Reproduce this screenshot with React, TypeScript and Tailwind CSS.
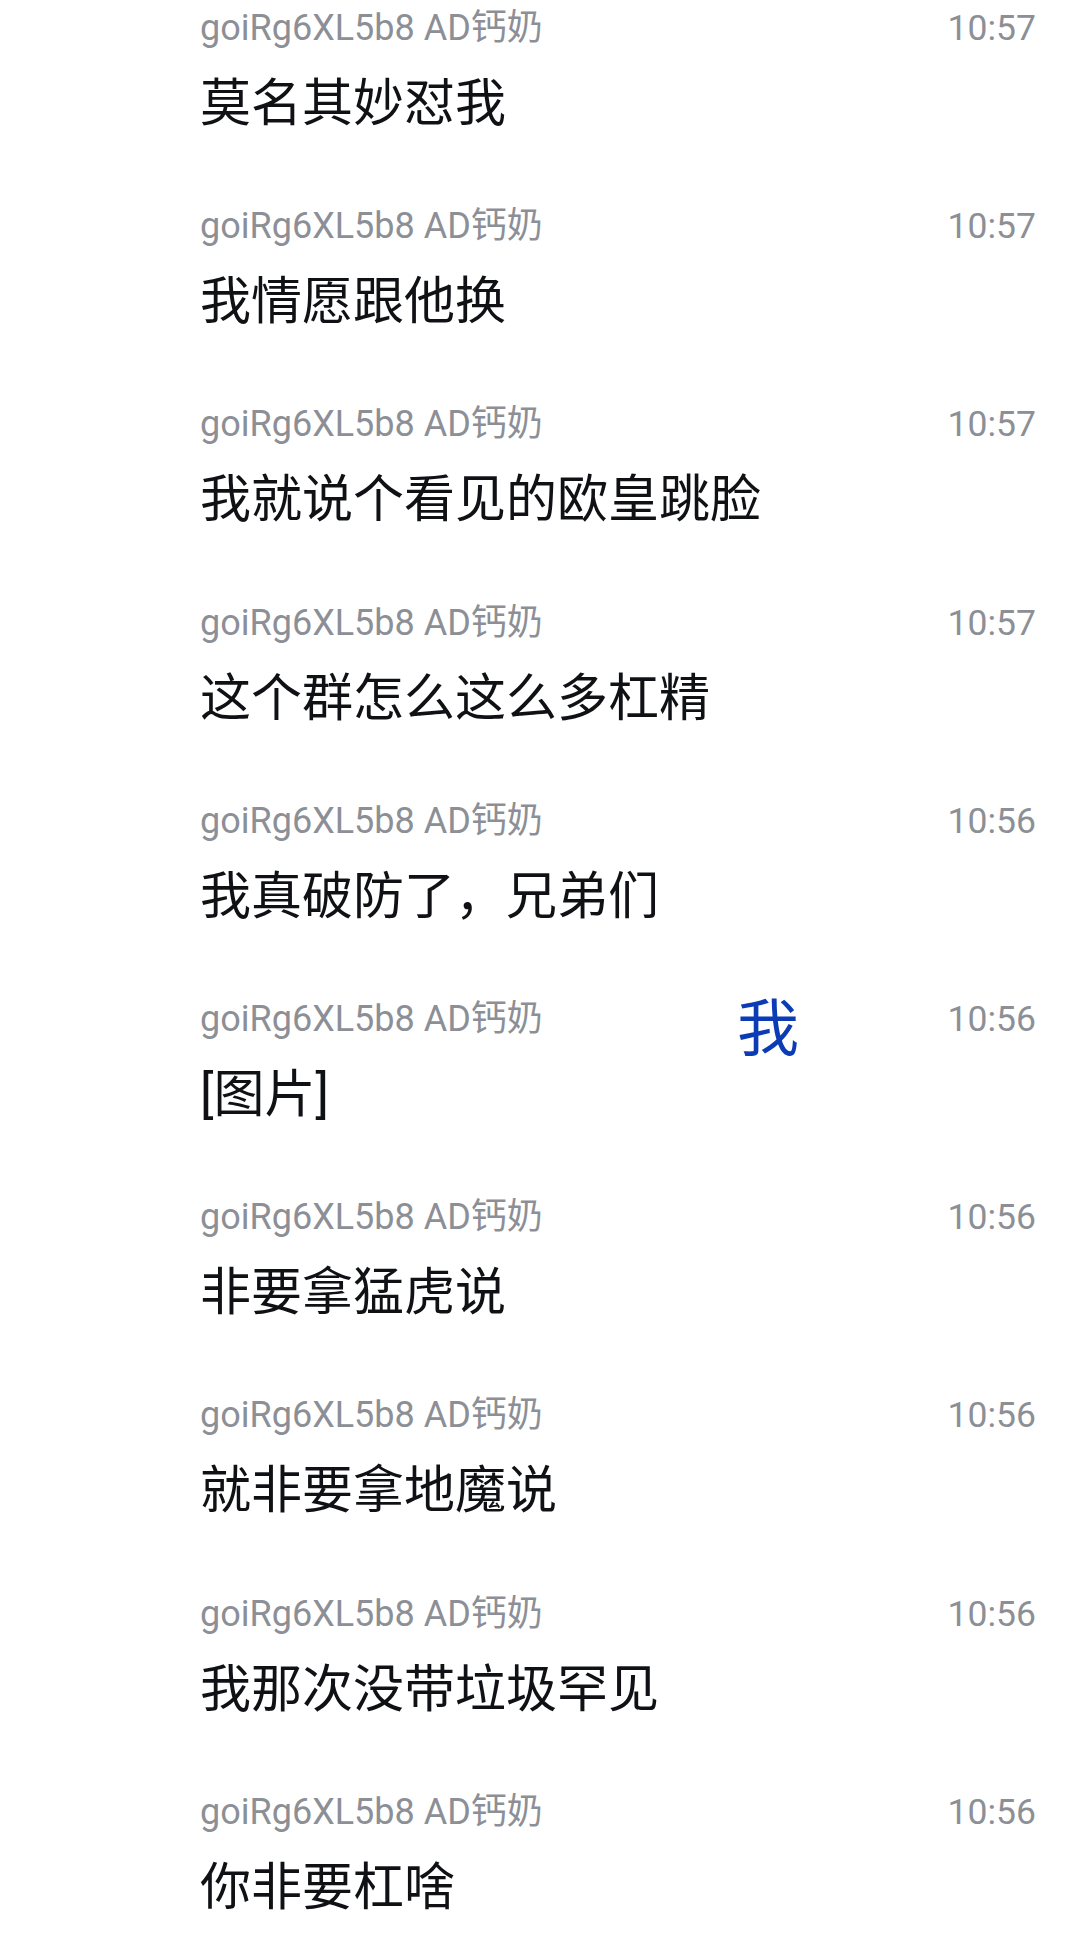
import React from "react";

const rows: { time: string; text: string }[] = [
  { time: "10:57", text: "莫名其妙怼我" },
  { time: "10:57", text: "我情愿跟他换" },
  { time: "10:57", text: "我就说个看见的欧皇跳脸" },
  { time: "10:57", text: "这个群怎么这么多杠精" },
  { time: "10:56", text: "我真破防了，兄弟们" },
  { time: "10:56", text: "[图片]" },
  { time: "10:56", text: "非要拿猛虎说" },
  { time: "10:56", text: "就非要拿地魔说" },
  { time: "10:56", text: "我那次没带垃圾罕见" },
  { time: "10:56", text: "你非要杠啥" },
];

const font = { fontFamily: '"Roboto", "Noto Sans CJK SC", sans-serif' };

export default function App() {
  return (
    <div className="relative w-[1080px] h-[1941px] overflow-hidden bg-white" style={font}>
      <div className="flex flex-col">
        {rows.map((r, i) => (
          <div key={i} className="h-[198.2px] shrink-0 flex flex-col pl-[200px] pr-[44px] pt-[6px]">
            <div className="flex justify-between items-center h-[44px] leading-[44px] text-[#8c8f96]">
              <span className="text-[36px]">goiRg6XL5b8 AD钙奶</span>
              <span className="text-[35.5px]">{r.time}</span>
            </div>
            <div className="mt-[19px] h-[70px] text-[51px] leading-[70px] text-[#0f1115]">{r.text}</div>
          </div>
        ))}
      </div>
      <div className="absolute left-[737px] top-[995px] text-[62px] leading-[70px] text-[#0b3cb5]">我</div>
    </div>
  );
}
